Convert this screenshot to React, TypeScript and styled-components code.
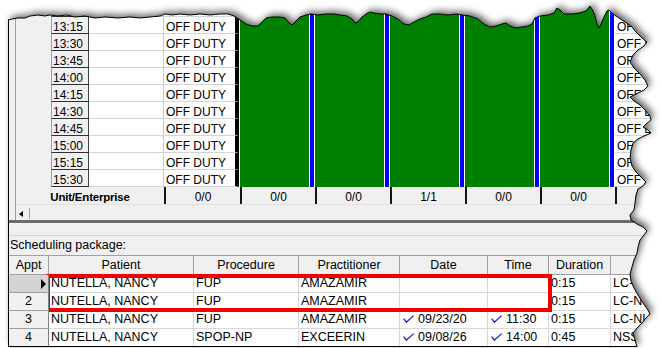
import styled, { createGlobalStyle } from "styled-components"

const TIMES = ["13:00", "13:15", "13:30", "13:45", "14:00", "14:15", "14:30", "14:45", "15:00", "15:15", "15:30"]
const SLOT_COUNT = 5
const TOTALS = [
  { value: "0/0", width: 76 },
  { value: "0/0", width: 75 },
  { value: "0/0", width: 75 },
  { value: "1/1", width: 75 },
  { value: "0/0", width: 75 },
  { value: "0/0", width: 75 },
]

const COLUMNS = ["Appt", "Patient", "Procedure", "Practitioner", "Date", "Time", "Duration", ""]

type Appt = {
  appt: string
  patient: string
  procedure: string
  practitioner: string
  date: string
  time: string
  duration: string
  location: string
}

const APPTS: Appt[] = [
  { appt: "", patient: "NUTELLA, NANCY", procedure: "FUP", practitioner: "AMAZAMIR", date: "", time: "", duration: "0:15", location: "LC-NUR" },
  { appt: "2", patient: "NUTELLA, NANCY", procedure: "FUP", practitioner: "AMAZAMIR", date: "", time: "", duration: "0:15", location: "LC-NUR" },
  { appt: "3", patient: "NUTELLA, NANCY", procedure: "FUP", practitioner: "AMAZAMIR", date: "09/23/20", time: "11:30", duration: "0:15", location: "LC-NUR" },
  { appt: "4", patient: "NUTELLA, NANCY", procedure: "SPOP-NP", practitioner: "EXCEERIN", date: "09/08/26", time: "14:00", duration: "0:45", location: "NSS" },
]

// torn edge of the screenshot, top then right side
const TOP_EDGE = [
  [8, 20], [12, 19], [18, 18], [25, 18], [30, 16], [38, 15], [45, 16], [50, 15], [58, 16], [66, 15],
  [75, 17], [85, 16], [95, 18], [105, 17], [118, 18], [130, 17], [140, 18], [150, 17], [160, 16], [165, 14],
  [172, 15], [180, 14], [190, 15], [200, 14], [210, 15], [220, 14], [228, 14], [234, 16], [240, 20], [246, 24],
  [252, 26], [258, 26], [262, 22], [266, 18], [272, 17], [280, 17], [285, 18], [289, 23], [292, 25], [296, 21],
  [300, 17], [306, 15], [311, 14], [318, 15], [326, 14], [334, 14], [340, 15], [347, 16], [352, 19], [355, 23],
  [358, 22], [362, 17], [366, 14], [370, 12], [374, 13], [380, 14], [386, 14], [392, 16], [398, 19], [404, 24],
  [409, 25], [414, 22], [420, 19], [426, 17], [432, 14], [440, 14], [448, 15], [456, 14], [462, 15], [470, 16],
  [478, 19], [484, 24], [490, 27], [496, 26], [502, 24], [506, 23], [510, 26], [516, 28], [522, 27], [528, 26],
  [532, 24], [535, 18], [540, 16], [548, 15], [554, 13], [557, 8], [560, 10], [564, 14], [572, 14], [580, 13],
  [586, 11], [590, 6], [592, 9], [595, 16], [597, 24], [599, 28], [601, 24], [604, 17], [607, 11], [609, 10],
  [612, 13], [616, 16], [622, 20], [628, 24], [632, 27],
]
const RIGHT_EDGE = [
  [636, 32], [642, 38], [647, 42], [644, 46], [638, 50], [633, 55], [630, 62], [634, 68], [640, 74], [645, 80],
  [648, 86], [644, 90], [636, 94], [630, 97], [634, 101], [640, 105], [645, 110], [650, 116], [651, 120], [646, 124],
  [643, 127], [648, 130], [651, 133], [644, 136], [638, 139], [633, 143], [631, 150], [630, 158], [632, 166], [636, 172],
  [641, 177], [646, 182], [643, 186], [638, 189], [636, 195], [635, 203], [634, 210], [630, 215], [631, 220], [637, 224],
  [643, 227], [647, 231], [644, 235], [640, 240], [638, 247], [637, 253], [634, 260], [632, 267], [630, 274], [631, 281],
  [634, 288], [638, 295], [643, 303], [648, 310], [650, 314], [646, 318], [642, 323], [637, 328], [633, 333], [635, 340],
  [637, 347],
]

const edgeLine = [...TOP_EDGE, ...RIGHT_EDGE].map(([x, y]) => `${x},${y}`).join(" L ")
const paperPath = `M8,347 L${edgeLine} Z`
const outsidePath = `M0,0 H661 V348 H0 Z ${paperPath}`

const GlobalStyle = createGlobalStyle`
  html, body {
    margin: 0;
    padding: 0;
    background: #fff;
  }
  body {
    font-family: "Liberation Sans", Arial, sans-serif;
    color: #000;
  }
`

const Stage = styled.div`
  position: relative;
  width: 661px;
  height: 348px;
  overflow: hidden;
  background: #fff;
`

const Window = styled.div`
  margin-left: 8px;
  width: 653px;
  height: 347px;
  box-sizing: border-box;
  border-left: 1px solid #000;
  border-bottom: 1px solid #000;
  background: #f0f0f0;
  display: flex;
  flex-direction: column;
  overflow: hidden;
`

const SchedulePane = styled.div`
  display: flex;
  height: 220px;
  flex-shrink: 0;
`

const Gutter = styled.div`
  width: 7px;
  box-sizing: border-box;
  border-right: 1px solid #a0a0a0;
  background: #f0f0f0;
`

const Grid = styled.div`
  flex: 1;
  display: flex;
  flex-direction: column;
  overflow: hidden;
`

const TimeRow = styled.div`
  display: flex;
  height: 17px;
  flex-shrink: 0;
`

const GridCell = styled.div`
  box-sizing: border-box;
  height: 17px;
  flex-shrink: 0;
  overflow: hidden;
  white-space: nowrap;
  font-size: 12px;
  line-height: 17px;
  padding-top: 2px;
`

const RowHead = styled(GridCell)`
  width: 35px;
  background: #f0f0f0;
`

const TimeCell = styled(GridCell)`
  width: 38px;
  padding-left: 1px;
  background: #f0f0f0;
  border-left: 1px solid #a0a0a0;
  border-right: 1px solid #404040;
  border-bottom: 1px solid #303030;
`

const BlankCell = styled(GridCell)`
  width: 75px;
  background: #fff;
  border-right: 1px solid #c8c8c8;
  border-bottom: 1px solid #d4d4d4;
`

const DutyCell = styled(GridCell)`
  width: 75px;
  padding-left: 2px;
  background: #fff;
  border-right: 4px solid #000;
  border-bottom: 1px solid #d4d4d4;
`

const Seam = styled.div`
  width: 1px;
  flex-shrink: 0;
  background: #fff;
`

const SlotCell = styled.div<{ $fill: string }>`
  width: 75px;
  height: 17px;
  flex-shrink: 0;
  background: linear-gradient(
    to right,
    ${({ $fill }) => $fill} 0 69px,
    #fff 69px 70px,
    #0000ff 70px 74px,
    #fff 74px 75px
  );
`

const TailCell = styled(GridCell)`
  flex: 1;
  padding-left: 2px;
  background: #fff;
  border-bottom: 1px solid #d4d4d4;
`

const TotalsRow = styled.div`
  display: flex;
  height: 17px;
  flex-shrink: 0;
  background: #f0f0f0;
`

const TotalsLabel = styled(GridCell)`
  width: 148px;
  text-align: center;
  font-size: 11.5px;
  font-weight: bold;
  letter-spacing: -0.2px;
`

const TotalsCell = styled(GridCell)<{ $width?: number }>`
  width: ${({ $width }) => ($width ? `${$width}px` : "auto")};
  flex: ${({ $width }) => ($width ? "none" : "1")};
  text-align: center;
  border-left: 2px solid #141414;
`

const ScrollBar = styled.div`
  display: flex;
  height: 16px;
  flex-shrink: 0;
  background: #f0f0f0;
  border-top: 1px solid #e2e2e2;
  box-sizing: border-box;
`

const ArrowButton = styled.div`
  width: 14px;
  box-sizing: border-box;
  border-right: 1px solid #a0a0a0;
  margin: 3px 0 1px;
  display: flex;
  align-items: center;
  padding-left: 3px;

  &::before {
    content: "";
    border-top: 3px solid transparent;
    border-bottom: 3px solid transparent;
    border-right: 4px solid #000;
  }
`

const Splitter = styled.div`
  height: 3px;
  flex-shrink: 0;
  background: #6b6b6b;
`

const PackagePane = styled.div`
  flex: 1;
  display: flex;
  flex-direction: column;
  background: #f0f0f0;
`

const PaneGap = styled.div`
  height: 13px;
  flex-shrink: 0;
  box-sizing: border-box;
  border-bottom: 1px solid #d2d2d2;
`

const Caption = styled.div`
  height: 19px;
  line-height: 19px;
  padding-left: 1px;
  font-size: 12.5px;
`

const Table = styled.div`
  position: relative;
  display: grid;
  grid-template-columns: 40px 145px 105px 101px 88px 61px 62px 1fr;
  grid-template-rows: 20px;
  grid-auto-rows: 18px;
  font-size: 12.5px;
`

const HeadCell = styled.div`
  box-sizing: border-box;
  text-align: center;
  line-height: 18px;
  white-space: nowrap;
  overflow: hidden;
  background: #f0f0f0;
  border-top: 1px solid #a0a0a0;
  border-right: 1px solid #a0a0a0;
  border-bottom: 1px solid #a0a0a0;
`

const ApptCell = styled.div<{ $current?: boolean }>`
  position: relative;
  z-index: 1;
  box-sizing: border-box;
  display: flex;
  align-items: center;
  justify-content: ${({ $current }) => ($current ? "flex-end" : "center")};
  padding-right: ${({ $current }) => ($current ? "2px" : "0")};
  line-height: 17px;
  background: ${({ $current }) => ($current ? "#d4d4d4" : "#f0f0f0")};
  border-right: 1px solid #808080;
  border-bottom: 1px solid #a0a0a0;
`

const RowPointer = styled.span`
  border-top: 5px solid transparent;
  border-bottom: 5px solid transparent;
  border-left: 5px solid #000;
`

const DataCell = styled.div`
  box-sizing: border-box;
  display: flex;
  align-items: center;
  padding-left: 2px;
  line-height: 17px;
  white-space: nowrap;
  overflow: hidden;
  background: #fff;
  border-right: 1px solid #d8d8d8;
  border-bottom: 1px solid #d8d8d8;
`

const Check = styled.svg`
  flex-shrink: 0;
  margin: -2px 4px 0 1px;
`

const SelectionBox = styled.div`
  position: absolute;
  left: 37px;
  top: 19px;
  width: 506px;
  height: 38px;
  box-sizing: border-box;
  border: 4px solid #f20000;
  pointer-events: none;
`

const TornEdge = styled.svg`
  position: absolute;
  left: 0;
  top: 0;
  pointer-events: none;
`

const Tick = () => (
  <Check width="11" height="8" viewBox="0 0 11 8">
    <path d="M0.6 3.6 L3.4 7.2 L10.6 0.6" fill="none" stroke="#1414c8" strokeWidth="1.2" />
  </Check>
)

const Checked = ({ value }: { value: string }) =>
  value ? (
    <>
      <Tick />
      {value}
    </>
  ) : null

const App = () => (
  <Stage>
    <GlobalStyle />
    <Window>
      <SchedulePane>
        <Gutter />
        <Grid>
          {TIMES.map((time) => (
            <TimeRow key={time}>
              <RowHead />
              <TimeCell>{time}</TimeCell>
              <BlankCell />
              <DutyCell>OFF DUTY</DutyCell>
              <Seam />
              {Array.from({ length: SLOT_COUNT }, (_, i) => (
                <SlotCell key={i} $fill="#008000" />
              ))}
              <TailCell>OFF DUTY</TailCell>
            </TimeRow>
          ))}
          <TotalsRow>
            <TotalsLabel>Unit/Enterprise</TotalsLabel>
            {TOTALS.map((t, i) => (
              <TotalsCell key={i} $width={t.width}>
                {t.value}
              </TotalsCell>
            ))}
            <TotalsCell />
          </TotalsRow>
          <ScrollBar>
            <ArrowButton />
          </ScrollBar>
        </Grid>
      </SchedulePane>
      <Splitter />
      <PackagePane>
        <PaneGap />
        <Caption>Scheduling package:</Caption>
        <Table>
          {COLUMNS.map((c, i) => (
            <HeadCell key={i}>{c}</HeadCell>
          ))}
          {APPTS.map((a, i) => (
            <Row key={i} appt={a} current={i === 0} />
          ))}
          <SelectionBox />
        </Table>
      </PackagePane>
    </Window>
    <TornEdge width="661" height="348" viewBox="0 0 661 348">
      <defs>
        <clipPath id="outside">
          <path d={outsidePath} clipRule="evenodd" />
        </clipPath>
        <filter id="soft" x="-5%" y="-20%" width="110%" height="140%">
          <feGaussianBlur stdDeviation="3.5" />
        </filter>
      </defs>
      <path d={outsidePath} fill="#fff" fillRule="evenodd" />
      <g clipPath="url(#outside)">
        <path d={paperPath} fill="#000" opacity="0.6" transform="translate(3,-3)" filter="url(#soft)" />
      </g>
      <path d={`M${edgeLine}`} fill="none" stroke="#000" strokeWidth="1" />
    </TornEdge>
  </Stage>
)

const Row = ({ appt, current }: { appt: Appt; current: boolean }) => (
  <>
    <ApptCell $current={current}>{current ? <RowPointer /> : appt.appt}</ApptCell>
    <DataCell>{appt.patient}</DataCell>
    <DataCell>{appt.procedure}</DataCell>
    <DataCell>{appt.practitioner}</DataCell>
    <DataCell>
      <Checked value={appt.date} />
    </DataCell>
    <DataCell>
      <Checked value={appt.time} />
    </DataCell>
    <DataCell>{appt.duration}</DataCell>
    <DataCell>{appt.location}</DataCell>
  </>
)

export default App
